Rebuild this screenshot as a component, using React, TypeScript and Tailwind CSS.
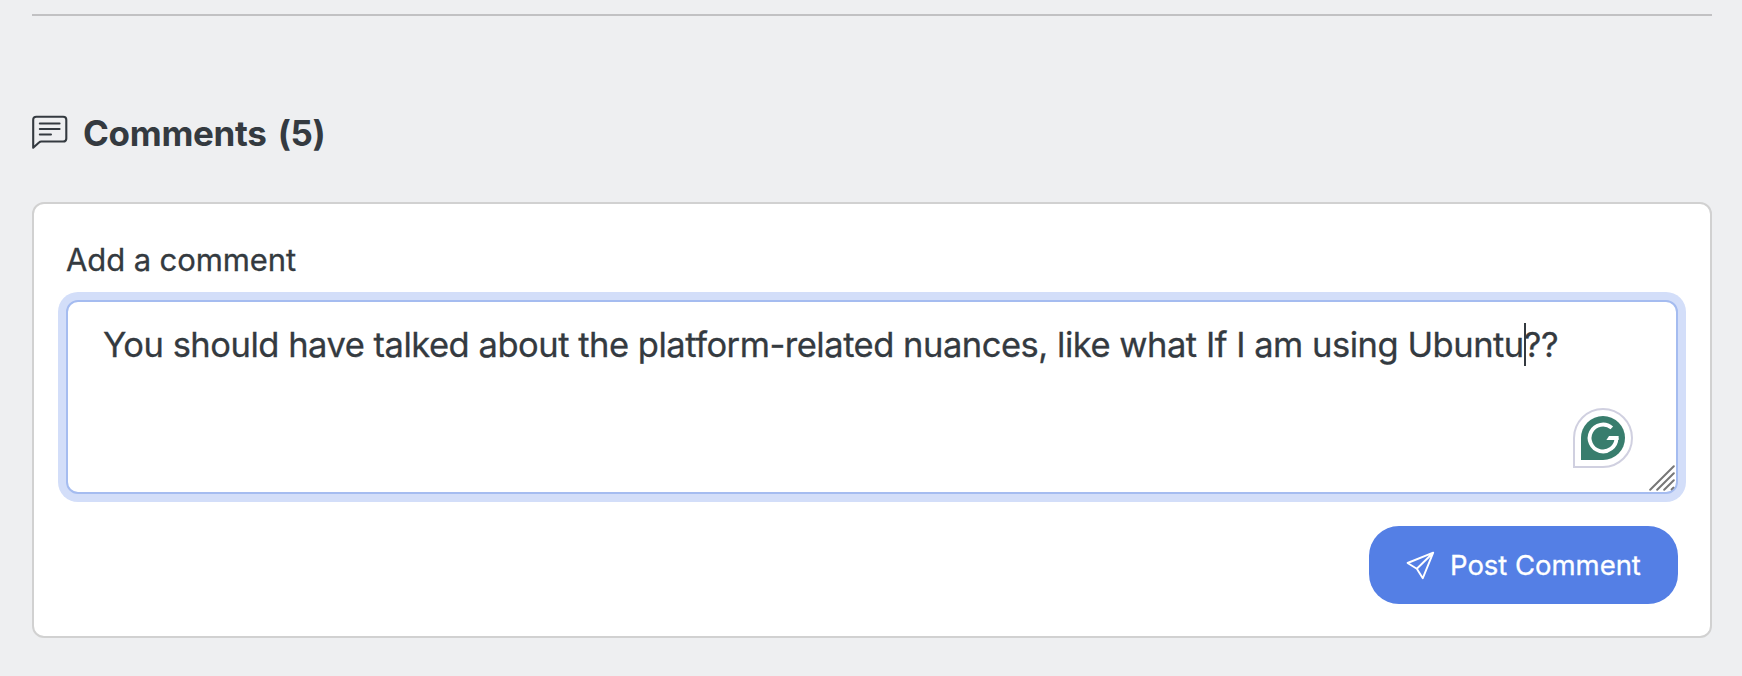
function CommentsIcon() {
  return (
    <svg className="block h-[36px] w-[36px] shrink-0" viewBox="0 0 36 36" fill="none" stroke="#343a40" strokeLinecap="round" strokeLinejoin="round">
      <path strokeWidth="2.1" d="M1.2 32.7V4.8Q1.2 1.7 4.3 1.7H31.2Q34.3 1.7 34.3 4.8V23.4Q34.3 26.5 31.2 26.5H9.4Q8 26.5 7 27.5Z" />
      <path strokeWidth="2" d="M7.8 8.5H27.6M7.8 14H27.6M7.8 19.5H19" />
    </svg>
  );
}

function SendIcon() {
  return (
    <svg className="block h-[30px] w-[30px] shrink-0" viewBox="0 0 30 30" fill="none" stroke="#fff" strokeWidth="1.9" strokeLinejoin="round">
      <path d="M27.2 2.7L1.6 13L10.8 18.7L16.8 28.2ZM27.2 2.7L10.8 18.7" />
    </svg>
  );
}

function AssistantBadge() {
  return (
    <svg className="block h-[60px] w-[60px]" viewBox="0 0 60 60" fill="none">
      <path d="M1 59V30A29 29 0 1 1 30 59Z" fill="#fff" stroke="#d0d0e0" strokeWidth="2" />
      <path d="M8 52V30A22 22 0 1 1 30 52Z" fill="#387d6d" />
      <path d="M38.8 19.9A13.4 13.4 0 1 0 43.4 30" stroke="#fff" strokeWidth="3.9" />
      <path d="M36 28H45.6V32H33.4Z" fill="#fff" />
    </svg>
  );
}

function ResizeGrip() {
  return (
    <svg className="block h-[26px] w-[26px]" viewBox="0 0 26 26" stroke="#777" strokeWidth="2" strokeLinecap="round">
      <path d="M1.2 24.8L24.8 1.2M8.2 24.8L24.8 8.2M15.2 24.8L24.8 15.2M22.6 24.4L24.4 22.6" />
    </svg>
  );
}

export default function App() {
  return (
    <div className="h-[676px] w-[1742px] overflow-hidden bg-[#eeeff1] px-8 pt-[14px] font-['Inter','Liberation_Sans',sans-serif] text-[#343a40]">
      <div className="h-[2px] w-[1680px] bg-[#c1c1c3]" />

      <h2 className="mt-[90px] flex h-[54px] items-center">
        <CommentsIcon />
        <span className="ml-[15px] whitespace-nowrap text-[35px] leading-[54px] font-bold tracking-[-0.3px] [word-spacing:3px]">Comments (5)</span>
      </h2>

      <section className="mt-[42px] flex h-[436px] w-[1680px] flex-col rounded-[12px] border-2 border-[#d1d1d1] bg-white px-8 pt-8">
        <label className="block h-[48px] whitespace-nowrap text-[31px] leading-[48px] tracking-[-0.1px] [-webkit-text-stroke:0.3px_#343a40]">Add a comment</label>
        <div className="relative mt-[16px] h-[194px] w-[1612px] shrink-0 rounded-[12px] border-2 border-[#a5bcf0] bg-white pt-[16px] pl-[35px] shadow-[0_0_0_8px_#d3def9]">
          <p className="whitespace-nowrap text-[34.5px] leading-[54px] tracking-[-0.48px] [-webkit-text-stroke:0.3px_#343a40]">
            You should have talked about the platform-related nuances, like what If I am using Ubuntu
            <span className="relative">
              <i className="absolute top-[-1px] left-0 h-[43px] w-[2px] bg-[#343a40]" />
              ??
            </span>
          </p>
          <div className="absolute top-[106px] left-[1505px]">
            <AssistantBadge />
          </div>
          <div className="absolute top-[163px] left-[1581px]">
            <ResizeGrip />
          </div>
        </div>
        <button className="mt-[32px] flex h-[78px] w-[309px] shrink-0 items-center self-end rounded-[30px] bg-[#547fe5] pl-[37px] text-white">
          <SendIcon />
          <span className="ml-[14px] whitespace-nowrap text-[27.5px] leading-[42px] tracking-[-0.03px] [-webkit-text-stroke:0.3px_#fff]">Post Comment</span>
        </button>
      </section>
    </div>
  );
}
